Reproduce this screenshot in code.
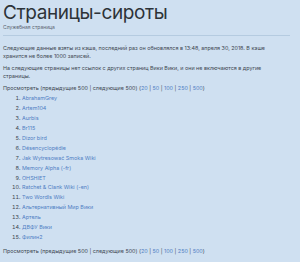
const items = [
	"AbrahamGrey",
	"Artem104",
	"Aurbis",
	"Br115",
	"Dizor bird",
	"Désencyclopédie",
	"Jak Wytresować Smoka Wiki",
	"Memory Alpha (-fr)",
	"OHSHIET",
	"Ratchet & Clank Wiki (-en)",
	"Two Wordls Wiki",
	"Альтернативный Мир Вики",
	"Артель",
	"ДВФУ Вики",
	"Филин2",
];

const Pager = () => (
	<p className="leading-[8px]">
		Просмотреть (предыдущие 500 | следующие 500) (
		<a className="text-[#4f7fc4]">20</a> | <a className="text-[#4f7fc4]">50</a> |{" "}
		<a className="text-[#4f7fc4]">100</a> | <a className="text-[#4f7fc4]">250</a> |{" "}
		<a className="text-[#4f7fc4]">500</a>)
	</p>
);

export default function App() {
	return (
		<div
			className="w-[300px] h-[262px] overflow-hidden bg-[#cfe0f1] text-[#3d4650] px-[3px]"
			style={{ fontFamily: "Inter, 'Noto Sans', sans-serif" }}
		>
			<h1 className="text-[19px] leading-[20px] pt-[3px] text-[#2d3338] font-normal tracking-[-0.4px]">
				Страницы-сироты
			</h1>
			<div className="text-[5px] leading-[6px] mt-[1px] text-[#5a6470]">Служебная страница</div>
			<div className="h-px bg-[#b5cbe0] mt-[5px] w-[287px]" />
			<div className="text-[5.4px] mt-[8px] pr-[20px]">
				<p className="leading-[8px]">
					Следующие данные взяты из кэша, последний раз он обновлялся в 13:48, апреля 30, 2018. В кэше
					хранится не более 1000 записей.
				</p>
				<p className="leading-[8px] mt-[4px]">
					На следующие страницы нет ссылок с других страниц Вики Вики, и они не включаются в другие
					страницы.
				</p>
				<div className="mt-[4px]">
					<Pager />
				</div>
				<ol className="mt-[2px] mb-[4px] pl-[19px] list-decimal">
					{items.map((it) => (
						<li key={it} className="leading-[9.93px]">
							<a className="text-[#4f7fc4]">{it}</a>
						</li>
					))}
				</ol>
				<Pager />
			</div>
		</div>
	);
}
